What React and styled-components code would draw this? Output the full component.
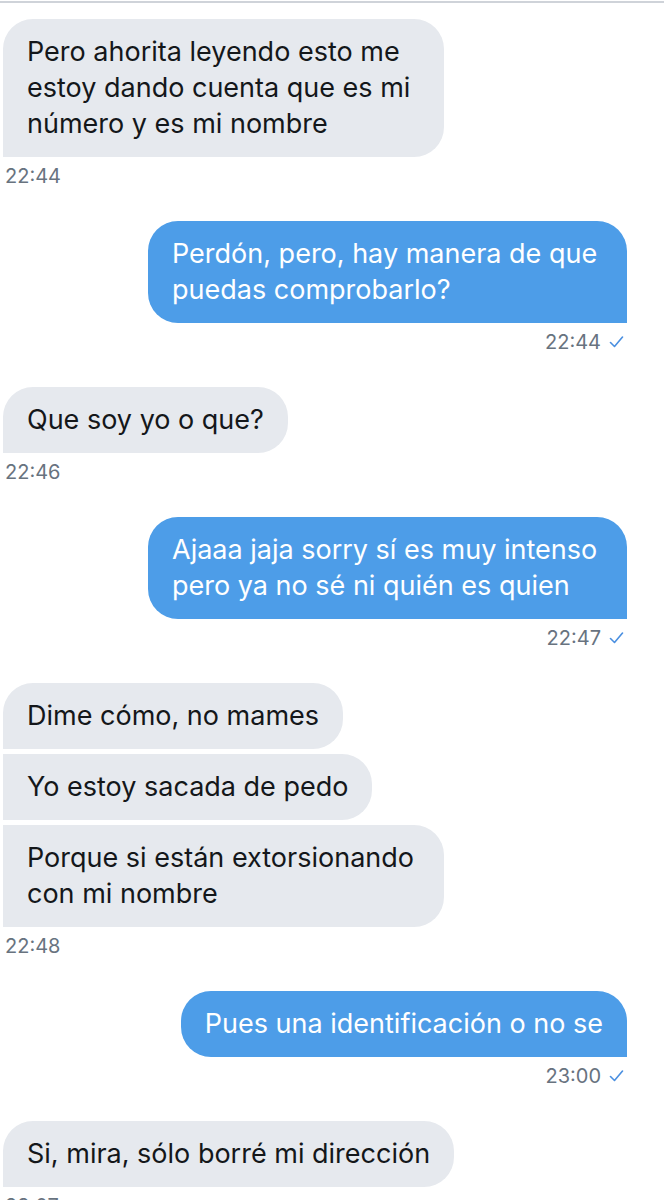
import React from "react"
import styled, { createGlobalStyle } from "styled-components"

const messages = [
    { id: 1, side: "in", time: "22:44", wide: true, lines: ["Pero ahorita leyendo esto me\nestoy dando cuenta que es mi\nnúmero y es mi nombre"] },
    { id: 2, side: "out", time: "22:44", wide: true, lines: ["Perdón, pero, hay manera de que\npuedas comprobarlo?"] },
    { id: 3, side: "in", time: "22:46", lines: ["Que soy yo o que?"] },
    { id: 4, side: "out", time: "22:47", wide: true, lines: ["Ajaaa jaja sorry sí es muy intenso\npero ya no sé ni quién es quien"] },
    { id: 5, side: "in", time: "22:48", lines: ["Dime cómo, no mames", "Yo estoy sacada de pedo", "Porque si están extorsionando\ncon mi nombre"] },
    { id: 6, side: "out", time: "23:00", lines: ["Pues una identificación o no se"] },
    { id: 7, side: "in", time: "23:07", lines: ["Si, mira, sólo borré mi dirección"] },
]

const CheckIcon = () => (
    <svg width="15" height="12" viewBox="0 0 15 12" fill="none">
        <polyline points="1.5,6.5 5.5,10.5 13.5,1" stroke="#4a8fe0" strokeWidth="1.6" strokeLinecap="round" strokeLinejoin="round" />
    </svg>
)

function App() {
    return (
        <>
            <GlobalStyle />
            <Page>
                {messages.map((msg) => (
                    <Group key={msg.id} $out={msg.side === "out"}>
                        <Stack>
                            {msg.lines.map((text, i) => (
                                <Bubble
                                    key={i}
                                    $out={msg.side === "out"}
                                    $first={i === 0}
                                    $wide={msg.wide || text.includes("\n")}
                                >
                                    {text}
                                </Bubble>
                            ))}
                        </Stack>
                        <Meta $out={msg.side === "out"}>
                            <span>{msg.time}</span>
                            {msg.side === "out" && <CheckIcon />}
                        </Meta>
                    </Group>
                ))}
            </Page>
        </>
    )
}

export default App

//styled components
const GlobalStyle = createGlobalStyle`
    html, body {
        margin: 0;
        padding: 0;
        background: #ffffff;
    }
    body {
        font-family: Inter, "Liberation Sans", Arial, sans-serif;
        -webkit-font-smoothing: antialiased;
        overflow: hidden;
    }
`
const Page = styled.div`
    width: 664px;
    height: 1200px;
    box-sizing: border-box;
    margin-top: 1px;
    border-top: 2px solid #cfd3d9;
    padding: 16px 37px 0 3px;
    display: flex;
    flex-direction: column;
    gap: 33px;
    overflow: hidden;
`
const Group = styled.div`
    display: flex;
    flex-direction: column;
    align-items: ${(p) => (p.$out ? "flex-end" : "flex-start")};
`
const Stack = styled.div`
    display: flex;
    flex-direction: column;
    align-items: inherit;
    gap: 5px;
`
const Bubble = styled.div`
    box-sizing: border-box;
    width: ${(p) => (p.$wide ? (p.$out ? "479px" : "441px") : "auto")};
    padding: 15px 24px;
    font-size: 27px;
    line-height: 36px;
    white-space: pre-line;
    color: ${(p) => (p.$out ? "#ffffff" : "#14171a")};
    background: ${(p) => (p.$out ? "#4d9de8" : "#e6e9ee")};
    border-radius: ${(p) =>
        p.$out
            ? "30px 30px 0 30px"
            : p.$first
            ? "30px 30px 30px 0"
            : "0 30px 30px 0"};
`
const Meta = styled.div`
    display: flex;
    align-items: center;
    gap: 8px;
    margin-top: 7px;
    padding: ${(p) => (p.$out ? "0 3px 0 0" : "0 0 0 2px")};
    font-size: 20px;
    line-height: 24px;
    color: #68737f;
`
